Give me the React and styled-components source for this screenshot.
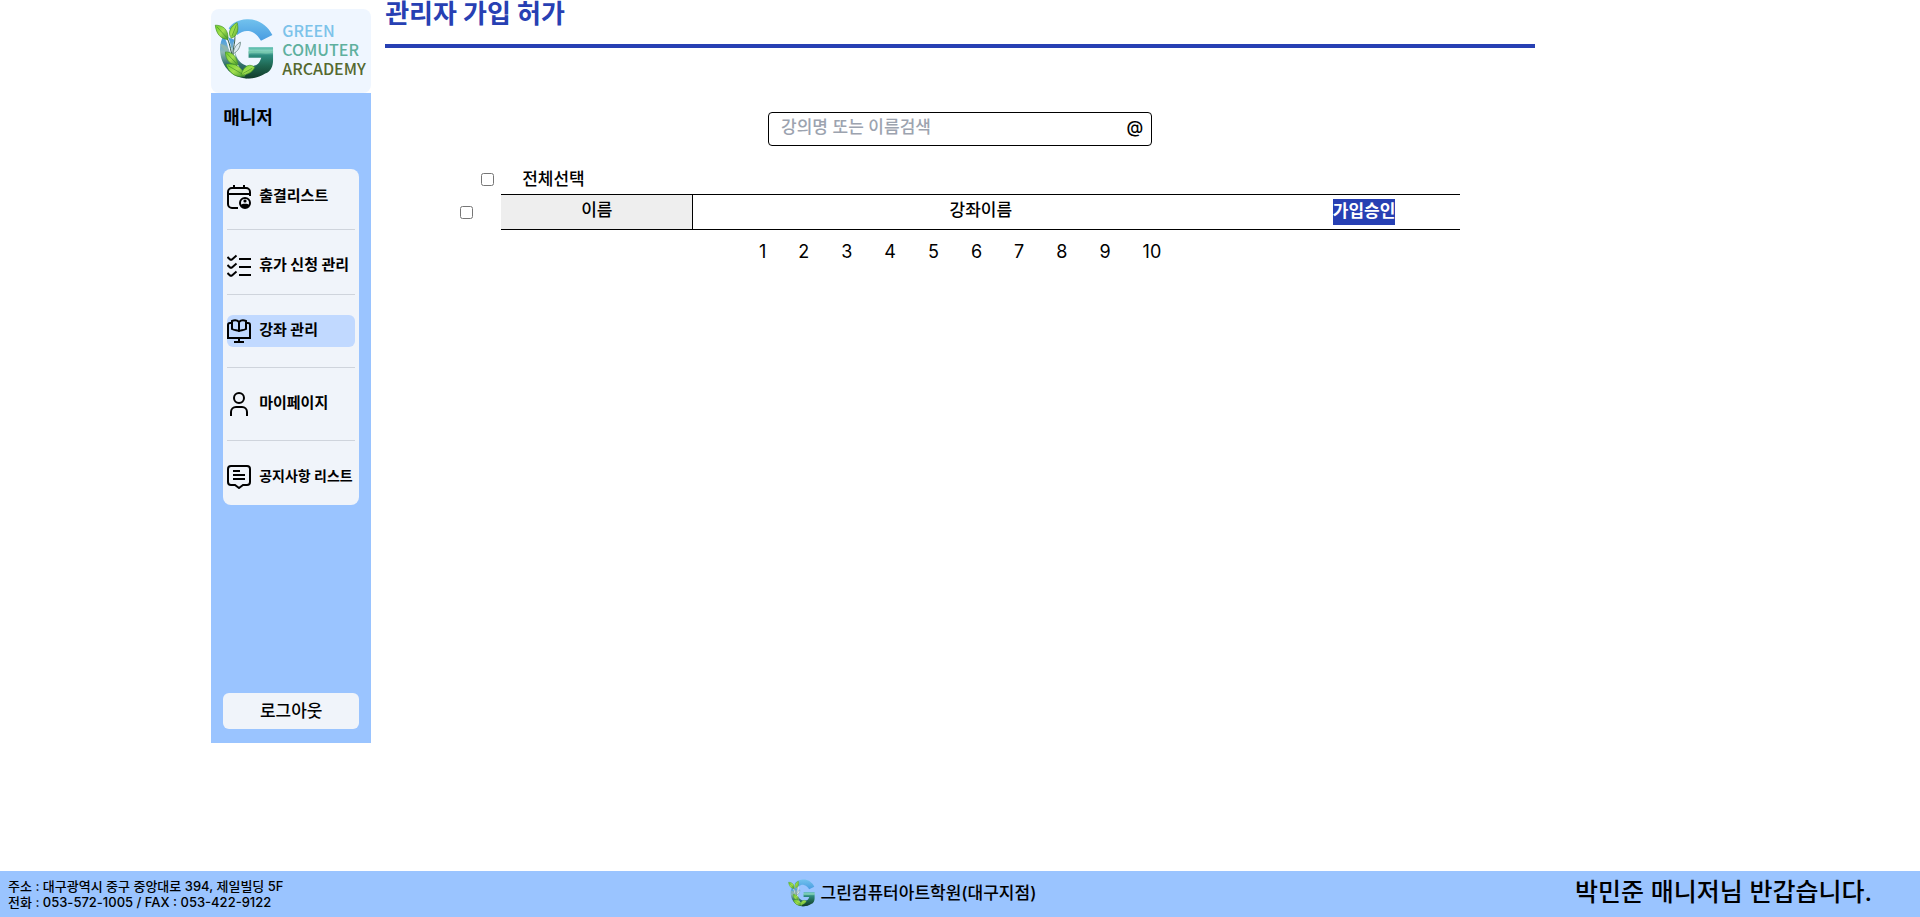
import React from "react";
import styled, { createGlobalStyle } from "styled-components";

const blue = "#2740b3";
const sky = "#9ac4ff";
const mist = "#f0f4fa";

const GlobalStyle = createGlobalStyle`
  *, *::before, *::after { box-sizing: border-box; }
  body {
    margin: 0;
    background: #fff;
    color: #000;
    font-family: Inter, "Noto Sans CJK KR", sans-serif;
    font-size: 17px;
    font-weight: 500;
    line-height: 24px;
  }
  h1, h2, p, ul, ol { margin: 0; padding: 0; }
  ul, ol { list-style: none; }
  button, input { font: inherit; color: inherit; }
  a { color: inherit; text-decoration: none; }
`;

const Page = styled.div`
  display: flex;
  flex-direction: column;
  min-height: 100vh;
`;

const Body = styled.div`
  display: grid;
  grid-template-columns: 160px minmax(0, 1fr);
  column-gap: 14px;
  align-items: start;
  flex: 1;
  padding: 0 calc(20% + 1px) 0 11%;
`;

const Sidebar = styled.aside`
  padding-top: 9px;
`;

const Brand = styled.a`
  display: flex;
  align-items: center;
  gap: 8px;
  height: 84px;
  padding: 0 0 4px 3px;
  border-radius: 8px;
  background: #eff6ff;
`;

const BrandName = styled.span`
  display: flex;
  flex-direction: column;
  font-family: "Noto Sans CJK KR", sans-serif;
  font-size: 16px;
  line-height: 19px;
`;

const BrandWord = styled.span`
  color: ${(p) => p.$color};
`;

const Panel = styled.div`
  display: flex;
  flex-direction: column;
  height: 650px;
  padding: 12px 12px 14px;
  background: ${sky};
`;

const Role = styled.h2`
  font-size: 18px;
  font-weight: 700;
  line-height: 26px;
`;

const Menu = styled.ul`
  margin-top: 38px;
  padding: 12px 4px;
  border-radius: 8px;
  background: ${mist};
`;

const MenuItem = styled.li`
  padding-bottom: ${(p) => p.$space}px;

  & + & {
    padding-top: 20px;
    border-top: 1px solid #cfd4dc;
  }
`;

const MenuLink = styled.a`
  display: flex;
  align-items: center;
  gap: 8px;
  height: 32px;
  border-radius: 6px;
  background: ${(p) => (p.$active ? "#c1d9ff" : "transparent")};
  font-size: ${(p) => (p.$small ? 14 : 15)}px;
  font-weight: 700;
  line-height: 24px;
  white-space: nowrap;
`;

const MenuLabel = styled.span`
  padding-bottom: 2px;
`;

const MenuIcon = styled.svg`
  flex: none;
  width: 24px;
  height: 24px;
  fill: none;
  stroke: #000;
  stroke-width: 2;
`;

const Logout = styled.button`
  height: 36px;
  margin-top: auto;
  border: 0;
  border-radius: 6px;
  background: ${mist};
`;

const Main = styled.main`
  display: flex;
  flex-direction: column;
`;

const Title = styled.h1`
  padding-bottom: 16px;
  border-bottom: 4px solid ${blue};
  color: ${blue};
  font-size: 26px;
  font-weight: 700;
  line-height: 28px;
`;

const Search = styled.form`
  display: flex;
  align-self: center;
  width: 384px;
  height: 34px;
  margin-top: 64px;
  border: 1px solid #000;
  border-radius: 4px;
`;

const SearchInput = styled.input`
  flex: 1;
  min-width: 0;
  padding: 0 0 4px 12px;
  border: 0;
  outline: 0;
  background: none;

  &::placeholder {
    color: #9ca3af;
    opacity: 1;
  }
`;

const SearchButton = styled.button`
  padding: 0 8px 4px;
  border: 0;
  background: none;
`;

const List = styled.section`
  margin-top: 24px;
  padding: 0 75px;
`;

const SelectAll = styled.label`
  display: flex;
  align-items: center;
  gap: 28px;
  margin: 0 0 6px 21px;
  line-height: 18px;
`;

const Check = styled.input`
  flex: none;
  width: 13px;
  height: 13px;
  margin: 0;
`;

const ListRow = styled.div`
  display: flex;
  align-items: center;
  gap: 28px;
`;

const Table = styled.table`
  flex: 1;
  table-layout: fixed;
  border-collapse: collapse;
  border-top: 1px solid #000;
  border-bottom: 1px solid #000;
`;

const Cell = styled.td`
  width: ${(p) => p.$width};
  height: 35px;
  padding: 0 0 5px;
  text-align: center;
`;

const NameCell = styled(Cell)`
  border-right: 1px solid #000;
  background: #eee;
`;

const ActionCell = styled(Cell)`
  padding: 0;
`;

const Approve = styled.button`
  display: block;
  height: 26px;
  margin: 0 auto;
  padding: 0 0 4px;
  border: 0;
  background: ${blue};
  color: #fff;
  font-weight: 700;
`;

const Pages = styled.ol`
  display: flex;
  justify-content: center;
  gap: 32px;
  margin-top: 10px;
  font-size: 18px;
  font-weight: 400;
`;

const Footer = styled.footer`
  display: grid;
  grid-template-columns: 1fr auto 1fr;
  align-items: center;
  height: 46px;
  padding: 0 48px 0 8px;
  background: ${sky};
`;

const Address = styled.p`
  font-size: 13px;
  line-height: 16px;
`;

const Academy = styled.p`
  display: flex;
  align-items: center;
  gap: 6px;
  padding: 0 56px 2px 0;
`;

const Greeting = styled.p`
  padding-bottom: 4px;
  font-size: 25px;
  line-height: 32px;
  text-align: right;
`;

function Logo({ id, width, height }) {
  return (
    <svg width={width} height={height} viewBox="22 38 182 190" aria-hidden="true">
      <defs>
        <linearGradient id={`${id}-arc`} x1="0" y1="38" x2="0" y2="228" gradientUnits="userSpaceOnUse">
          <stop offset="0" stopColor="#74c4ee" />
          <stop offset="0.35" stopColor="#4b9ee2" />
          <stop offset="0.55" stopColor="#8fb9b4" />
          <stop offset="0.75" stopColor="#31706a" />
          <stop offset="1" stopColor="#174834" />
        </linearGradient>
        <linearGradient id={`${id}-bar`} x1="0" y1="0" x2="0" y2="1">
          <stop offset="0" stopColor="#4fb6a6" />
          <stop offset="0.12" stopColor="#8bd4c0" />
          <stop offset="0.25" stopColor="#2f8e80" />
          <stop offset="0.6" stopColor="#1e6550" />
          <stop offset="1" stopColor="#123c2b" />
        </linearGradient>
        <linearGradient id={`${id}-leaf`} x1="0" y1="0" x2="1" y2="1">
          <stop offset="0" stopColor="#6fd02c" />
          <stop offset="0.5" stopColor="#a4e050" />
          <stop offset="1" stopColor="#43982c" />
        </linearGradient>
      </defs>
      <path
        d="M200 90C184 58 154 40 121 42C94 44 76 54 66 70L92 90C104 80 116 76 128 78C144 81 156 92 165 108Z"
        fill={`url(#${id}-arc)`}
      />
      <path
        d="M50 92C42 108 38 124 40 144C45 188 78 224 124 223C150 222 170 212 184 196L160 176C136 194 108 186 94 164C84 146 82 124 88 106Z"
        fill={`url(#${id}-arc)`}
      />
      <path
        d="M127 128H202V168C202 184 196 202 178 208C158 222 130 226 110 221L118 196C144 196 158 184 166 160H127Z"
        fill={`url(#${id}-bar)`}
      />
      <path d="M127 140C150 134 176 146 202 138V144C176 152 150 140 127 147Z" fill="#75c7ad" />
      <path d="M48 84C80 110 56 160 116 214" fill="none" stroke="#eff6ff" strokeWidth="9" />
      <path d="M86 82C96 118 66 136 92 188" fill="none" stroke="#eff6ff" strokeWidth="9" />
      <path d="M52 90C80 112 62 160 108 208" fill="none" stroke="#1f4c35" strokeWidth="3" />
      <path d="M84 86C90 118 70 140 84 176" fill="none" stroke="#33584a" strokeWidth="3" />
      <path d="M40 118C46 134 58 142 70 146C68 130 56 120 40 118Z" fill="#8fb5ae" />
      <path d="M102 112C90 118 80 132 80 148C94 140 102 128 102 112Z" fill="#dcebf2" stroke="#47675d" strokeWidth="2" />
      <g fill={`url(#${id}-leaf)`} stroke="#3f8f25" strokeWidth="2">
        <path d="M25 60C48 60 66 72 64 104C42 102 28 88 25 60Z" />
        <path d="M92 52C98 76 92 94 74 100C62 84 70 64 92 52Z" />
        <path d="M56 142C78 142 92 156 94 182C72 182 56 168 56 142Z" />
        <path d="M58 180C86 174 106 188 116 216C88 222 68 208 58 180Z" />
        <path d="M146 190C134 176 112 182 104 213C122 213 138 206 146 190Z" />
      </g>
      <path
        d="M30 65L60 98M90 58L76 94M60 146L90 178M64 184L110 211M138 192L110 208"
        fill="none"
        stroke="#3f8f25"
        strokeWidth="2"
      />
    </svg>
  );
}

const icons = {
  attendance: (
    <>
      <path d="M7 0V3M17 0V3M1 9H23M11 23H5A4 4 0 0 1 1 19V7A4 4 0 0 1 5 3H19A4 4 0 0 1 23 7V11" />
      <circle cx="18" cy="18" r="5" />
      <circle cx="18" cy="16" r="1.6" fill="#000" stroke="none" />
      <path d="M13.5 20C15.5 18.2 20.5 18.2 22.5 20C21.8 22 20 23 18 23S14.2 22 13.5 20Z" fill="#000" stroke="none" />
    </>
  ),
  vacation: (
    <>
      <path d="M12 5H24M12 13H24M12 21H24" />
      <path d="M0.5 3L3 5.4Q4 6.2 5 5.4L9.5 1.6M0.5 11L3 13.4Q4 14.2 5 13.4L9.5 9.6M0.5 19L3 21.4Q4 22.2 5 21.4L9.5 17.6" />
    </>
  ),
  course: (
    <>
      <path d="M4 4H3A2 2 0 0 0 1 6V19H23V6A2 2 0 0 0 21 4H20M12 19V23M7 23H17" />
      <path d="M12 3C10 1 7.5 1 5 2V10C7.5 11.5 10 11 12 12C14 11 16.5 11.5 19 10V2C16.5 1 14 1 12 3V12" />
    </>
  ),
  mypage: (
    <>
      <circle cx="12" cy="6" r="5" />
      <path d="M4 24V20A5 5 0 0 1 9 15H15A5 5 0 0 1 20 20V24" />
    </>
  ),
  notice: (
    <path d="M4 1H20A3 3 0 0 1 23 4V17A3 3 0 0 1 20 20H16L12 23L8 20H4A3 3 0 0 1 1 17V4A3 3 0 0 1 4 1ZM6 6H13M6 10H18M6 14H18" />
  ),
};

const menu = [
  { id: "attendance", label: "출결리스트", space: 16 },
  { id: "vacation", label: "휴가 신청 관리", space: 12 },
  { id: "course", label: "강좌 관리", space: 20, active: true },
  { id: "mypage", label: "마이페이지", space: 20 },
  { id: "notice", label: "공지사항 리스트", space: 0, small: true },
];

const pages = Array.from({ length: 10 }, (_, i) => i + 1);

export default function App() {
  return (
    <Page>
      <GlobalStyle />
      <Body>
        <Sidebar>
          <Brand href="#home">
            <Logo id="brand" width={60} height={62} />
            <BrandName>
              <BrandWord $color="#7cc3ea">GREEN</BrandWord>
              <BrandWord $color="#5eb09e">COMUTER</BrandWord>
              <BrandWord $color="#55692f">ARCADEMY</BrandWord>
            </BrandName>
          </Brand>
          <Panel>
            <Role>매니저</Role>
            <nav>
              <Menu>
                {menu.map((item) => (
                  <MenuItem key={item.id} $space={item.space}>
                    <MenuLink href={`#${item.id}`} $active={item.active} $small={item.small}>
                      <MenuIcon viewBox="0 0 24 24" aria-hidden="true">
                        {icons[item.id]}
                      </MenuIcon>
                      <MenuLabel>{item.label}</MenuLabel>
                    </MenuLink>
                  </MenuItem>
                ))}
              </Menu>
            </nav>
            <Logout type="button">로그아웃</Logout>
          </Panel>
        </Sidebar>
        <Main>
          <Title>관리자 가입 허가</Title>
          <Search role="search" onSubmit={(e) => e.preventDefault()}>
            <SearchInput type="text" aria-label="강의명 또는 이름검색" placeholder="강의명 또는 이름검색" />
            <SearchButton type="submit">@</SearchButton>
          </Search>
          <List>
            <SelectAll>
              <Check type="checkbox" />
              전체선택
            </SelectAll>
            <ListRow>
              <Check type="checkbox" aria-label="이름" />
              <Table>
                <tbody>
                  <tr>
                    <NameCell $width="20%">이름</NameCell>
                    <Cell $width="60%">강좌이름</Cell>
                    <ActionCell $width="20%">
                      <Approve type="button">가입승인</Approve>
                    </ActionCell>
                  </tr>
                </tbody>
              </Table>
            </ListRow>
            <Pages>
              {pages.map((n) => (
                <li key={n}>
                  <a href={`#page-${n}`}>{n}</a>
                </li>
              ))}
            </Pages>
          </List>
        </Main>
      </Body>
      <Footer>
        <Address>
          주소 : 대구광역시 중구 중앙대로 394, 제일빌딩 5F
          <br />
          전화 : 053-572-1005 / FAX : 053-422-9122
        </Address>
        <Academy>
          <Logo id="footer" width={27} height={28} />
          그린컴퓨터아트학원(대구지점)
        </Academy>
        <Greeting>박민준 매니저님 반갑습니다.</Greeting>
      </Footer>
    </Page>
  );
}
